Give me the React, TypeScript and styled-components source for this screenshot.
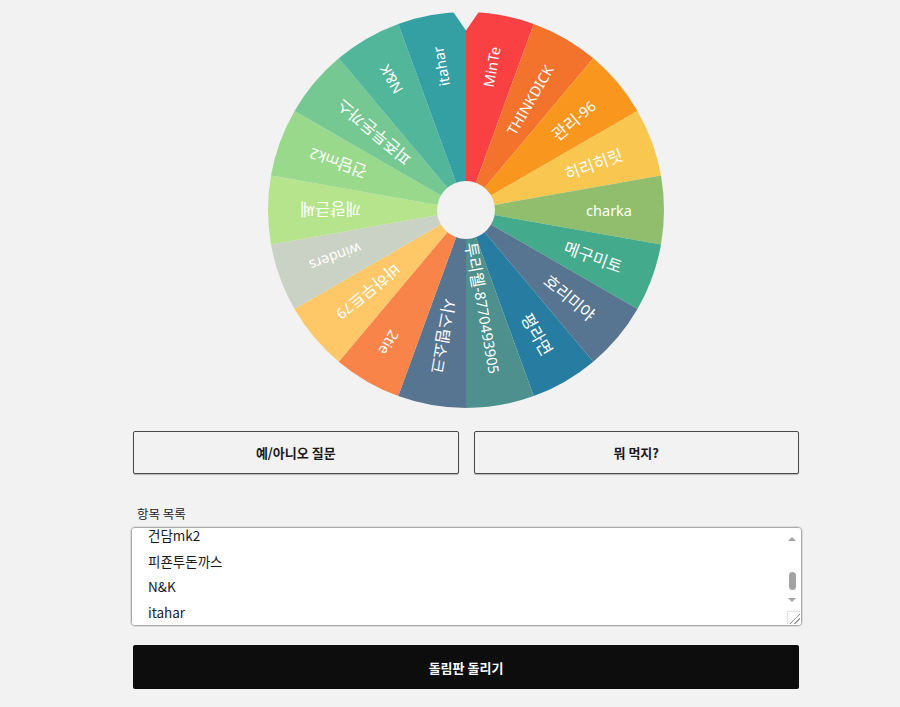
import React, { useEffect, useRef } from "react";
import styled, { createGlobalStyle } from "styled-components";

const GlobalStyle = createGlobalStyle`
  html, body {
    margin: 0;
    padding: 0;
    background: #f2f2f2;
  }
  body {
    font-family: "Noto Sans", "Noto Sans CJK KR", sans-serif;
    color: #222;
  }
`;

const items = [
  { label: "MinTe", color: "#F94144" },
  { label: "THINKDICK", color: "#F3722C" },
  { label: "관리-96", color: "#F8961E" },
  { label: "히리히릿", color: "#F9C74F" },
  { label: "charka", color: "#90BE6D" },
  { label: "메구미토", color: "#43AA8B" },
  { label: "호리미야", color: "#577590" },
  { label: "평라면", color: "#277DA1" },
  { label: "투리웰-8770493905", color: "#4D908E" },
  { label: "시스템쇼크", color: "#577590" },
  { label: "2tie", color: "#F9844A" },
  { label: "바하무트79", color: "#FEC868" },
  { label: "winders", color: "#CAD2C5" },
  { label: "깨량큰쎄", color: "#B5E48C" },
  { label: "건담mk2", color: "#99D98C" },
  { label: "피죤투돈까스", color: "#76C893" },
  { label: "N&K", color: "#52B69A" },
  { label: "itahar", color: "#34A0A4" },
];

const Page = styled.div`
  width: 666px;
  padding: 10px 0 0 133px;
  display: flex;
  flex-direction: column;
`;

const WheelWrap = styled.div`
  display: flex;
  justify-content: center;
  height: 400px;
`;

const ButtonRow = styled.div`
  display: grid;
  grid-template-columns: 1fr 1fr;
  gap: 15px;
  margin-top: 21px;
`;

const PresetButton = styled.button`
  height: 43px;
  background: #f2f2f2;
  border: 1px solid #4a4a4a;
  border-radius: 2px;
  box-shadow: 0 1px 1px rgba(0, 0, 0, 0.25);
  font-family: "Noto Sans CJK KR", "Noto Sans", sans-serif;
  font-size: 13px;
  font-weight: 700;
  color: #1a1a1a;
  cursor: pointer;
`;

const FieldLabel = styled.label`
  display: block;
  margin: 31px 0 4px 4px;
  font-family: "Noto Sans CJK KR", "Noto Sans", sans-serif;
  font-size: 12.5px;
  line-height: 18px;
  color: #222;
`;

const AreaBox = styled.div`
  position: relative;
  width: 671px;
  margin-left: -2px;
  height: 99px;
`;

const ListArea = styled.textarea`
  box-sizing: border-box;
  width: 100%;
  height: 100%;
  display: block;
  padding: 0 30px 0 16px;
  background: #fff;
  border: 1px solid #a9a9a9;
  border-radius: 4px;
  box-shadow: 0 0 0 1px #dcdcdc;
  font-family: "Noto Sans CJK KR", "Noto Sans", sans-serif;
  font-size: 13.5px;
  line-height: 25.5px;
  color: #1a1a1a;
  resize: none;
  outline: none;
  scrollbar-width: none;
  &::-webkit-scrollbar {
    display: none;
  }
`;

const ScrollRail = styled.div`
  position: absolute;
  top: 4px;
  right: 3px;
  width: 14px;
  bottom: 4px;
  pointer-events: none;
`;

const Arrow = styled.div<{ $dir: "up" | "down"; $top: number }>`
  position: absolute;
  left: 3px;
  top: ${(p) => p.$top}px;
  width: 0;
  height: 0;
  border-left: 4px solid transparent;
  border-right: 4px solid transparent;
  ${(p) =>
    p.$dir === "up"
      ? "border-bottom: 4px solid #a3a3a3;"
      : "border-top: 4px solid #a3a3a3;"}
`;

const Thumb = styled.div`
  position: absolute;
  left: 4px;
  top: 41px;
  width: 7px;
  height: 18px;
  border-radius: 4px;
  background: #a3a3a3;
`;

const Grip = styled.div`
  position: absolute;
  right: 2px;
  bottom: 2px;
  width: 12px;
  height: 12px;
  background:
    linear-gradient(135deg, transparent 55%, #9a9a9a 55%, #9a9a9a 62%, transparent 62%, transparent 75%, #9a9a9a 75%, #9a9a9a 82%, transparent 82%),
    #fff;
  border-left: 1px solid #e2e2e2;
  border-top: 1px solid #e2e2e2;
`;

const SpinButton = styled.button`
  margin-top: 19px;
  height: 44px;
  background: #0d0d0d;
  border: none;
  border-radius: 2px;
  color: #fff;
  font-family: "Noto Sans CJK KR", "Noto Sans", sans-serif;
  font-size: 13px;
  font-weight: 700;
  cursor: pointer;
`;

const SIZE = 400;
const CX = 200;
const CY = 200;
const R = 198;

function pt(angleDeg: number, r: number) {
  const a = (angleDeg * Math.PI) / 180;
  return [CX + r * Math.cos(a), CY + r * Math.sin(a)];
}

function runs(label: string) {
  const parts = label.split(/([\u3131-\uD79D]+)/).filter((s) => s.length > 0);
  return parts.map((s, i) =>
    /[\u3131-\uD79D]/.test(s) ? (
      <tspan key={i} fontSize={16.5} fontFamily={'"Noto Sans CJK KR", sans-serif'}>
        {s}
      </tspan>
    ) : (
      <tspan key={i}>{s}</tspan>
    )
  );
}

function Wheel() {
  const step = 360 / items.length;
  return (
    <svg width={SIZE} height={SIZE} viewBox={`0 0 ${SIZE} ${SIZE}`}>
      {items.map((it, i) => {
        const a0 = -90 + step * i;
        const a1 = a0 + step;
        const [x0, y0] = pt(a0, R);
        const [x1, y1] = pt(a1, R);
        return (
          <path
            key={it.label}
            d={`M ${CX} ${CY} L ${x0} ${y0} A ${R} ${R} 0 0 1 ${x1} ${y1} Z`}
            fill={it.color}
          />
        );
      })}
      {items.map((it, i) => {
        const mid = -90 + step * i + step / 2;
        return (
          <text
            key={"t" + it.label}
            x={CX + 166}
            y={CY}
            textAnchor="end"
            dominantBaseline="central"
            transform={`rotate(${mid} ${CX} ${CY})`}
            fill="#fff"
            fontSize={14.5}
            fontFamily={'"Noto Sans", "Noto Sans CJK KR", sans-serif'}
          >
            {runs(it.label)}
          </text>
        );
      })}
      <circle cx={CX} cy={CY} r={29} fill="#f2f2f2" />
      <polygon points="184.5,-2 215.5,-2 200,20.5" fill="#f2f2f2" />
    </svg>
  );
}

export default function App() {
  const areaRef = useRef<HTMLTextAreaElement>(null);
  useEffect(() => {
    const el = areaRef.current;
    if (el) el.scrollTop = el.scrollHeight;
  }, []);

  return (
    <>
      <GlobalStyle />
      <Page>
        <WheelWrap>
          <Wheel />
        </WheelWrap>
        <ButtonRow>
          <PresetButton>예/아니오 질문</PresetButton>
          <PresetButton>뭐 먹지?</PresetButton>
        </ButtonRow>
        <FieldLabel htmlFor="items">항목 목록</FieldLabel>
        <AreaBox>
          <ListArea
            id="items"
            ref={areaRef}
            spellCheck={false}
            defaultValue={items.map((it) => it.label).join("\n")}
          />
          <ScrollRail>
            <Arrow $dir="up" $top={6} />
            <Thumb />
            <Arrow $dir="down" $top={67} />
          </ScrollRail>
          <Grip />
        </AreaBox>
        <SpinButton>돌림판 돌리기</SpinButton>
      </Page>
    </>
  );
}
